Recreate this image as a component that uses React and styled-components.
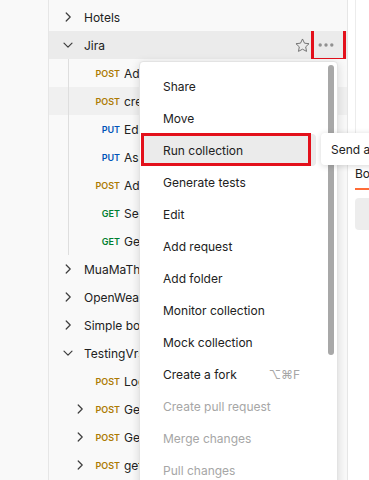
import styled, { createGlobalStyle } from "styled-components";

const GlobalStyle = createGlobalStyle`
  html, body {
    margin: 0;
    padding: 0;
    width: 369px;
    height: 480px;
    overflow: hidden;
    background: #ffffff;
  }
  body {
    font-family: Inter, "Noto Sans", "Liberation Sans", sans-serif;
    -webkit-font-smoothing: antialiased;
  }
  * {
    box-sizing: border-box;
  }
`;

const methodColors = {
  GET: "#007f31",
  POST: "#ad7a03",
  PUT: "#0053b8",
};

const tree = [
  { type: "collection", name: "Hotels", open: false },
  {
    type: "collection",
    name: "Jira",
    open: true,
    active: true,
    guide: true,
    children: [
      { method: "POST", name: "Add issue" },
      { method: "POST", name: "create issue", hover: true },
      { method: "PUT", name: "Edit issue" },
      { method: "PUT", name: "Assign issue" },
      { method: "POST", name: "Add comment" },
      { method: "GET", name: "Search issues" },
      { method: "GET", name: "Get issue" },
    ],
  },
  { type: "collection", name: "MuaMaThu", open: false },
  { type: "collection", name: "OpenWeather", open: false },
  { type: "collection", name: "Simple books API", open: false },
  {
    type: "collection",
    name: "TestingVrs",
    open: true,
    children: [
      { method: "POST", name: "Login" },
      { method: "POST", name: "Get token", folder: true },
      { method: "POST", name: "Get user", folder: true },
      { method: "POST", name: "get list", folder: true },
    ],
  },
];

const menuItems = [
  { label: "Share" },
  { label: "Move" },
  { label: "Run collection", marked: true },
  { label: "Generate tests" },
  { label: "Edit" },
  { label: "Add request" },
  { label: "Add folder" },
  { label: "Monitor collection" },
  { label: "Mock collection" },
  { label: "Create a fork", shortcut: "⌥⌘F" },
  { label: "Create pull request", disabled: true },
  { label: "Merge changes", disabled: true },
  { label: "Pull changes", disabled: true },
  { label: "Pull changes", disabled: true },
];

function Chevron({ open }) {
  return (
    <ChevronBox>
      <svg width="12" height="12" viewBox="0 0 12 12" fill="none">
        <path
          d={open ? "M2 4.2 L6 8.2 L10 4.2" : "M4.2 2 L8.2 6 L4.2 10"}
          stroke="#3d3d3d"
          strokeWidth="1.2"
          strokeLinecap="round"
          strokeLinejoin="round"
        />
      </svg>
    </ChevronBox>
  );
}

function StarIcon() {
  return (
    <svg width="17" height="17" viewBox="0 0 24 24" fill="none">
      <path
        d="M12 2.8 L14.8 8.7 L21.2 9.5 L16.5 13.9 L17.7 20.3 L12 17.2 L6.3 20.3 L7.5 13.9 L2.8 9.5 L9.2 8.7 Z"
        stroke="#6b6b6b"
        strokeWidth="1.3"
        strokeLinejoin="round"
      />
    </svg>
  );
}

function DotsIcon() {
  return (
    <svg width="16" height="6" viewBox="0 0 16 6">
      <circle cx="2.2" cy="3" r="1.7" fill="#909090" />
      <circle cx="8" cy="3" r="1.7" fill="#909090" />
      <circle cx="13.8" cy="3" r="1.7" fill="#909090" />
    </svg>
  );
}

export default function App() {
  return (
    <>
      <GlobalStyle />
      <Page>
        <Rail />
        <Sidebar>
          {tree.map((col) => (
            <div key={col.name}>
              <CollectionRow $active={col.active}>
                <Chevron open={col.open} />
                <RowName>{col.name}</RowName>
                {col.active && (
                  <Actions>
                    <StarButton>
                      <StarIcon />
                    </StarButton>
                    <DotsButton>
                      <DotsIcon />
                    </DotsButton>
                  </Actions>
                )}
              </CollectionRow>
              {col.open && (
                <Group $guide={col.guide}>
                  {col.children.map((req, i) => (
                    <RequestRow key={i} $hover={req.hover}>
                      <FolderSlot>{req.folder && <Chevron />}</FolderSlot>
                      <Method $color={methodColors[req.method]}>
                        {req.method}
                      </Method>
                      <RowName>{req.name}</RowName>
                    </RequestRow>
                  ))}
                </Group>
              )}
            </div>
          ))}
        </Sidebar>
        <Main>
          <UrlArea />
          <TabRow>
            <Tab>Body</Tab>
          </TabRow>
          <BodyBox />
        </Main>

        <Menu>
          <MenuList>
            {menuItems.map((item, i) => (
              <MenuItem
                key={i}
                $marked={item.marked}
                $disabled={item.disabled}
              >
                <span>{item.label}</span>
                {item.shortcut && <Shortcut>{item.shortcut}</Shortcut>}
              </MenuItem>
            ))}
          </MenuList>
          <ScrollTrack>
            <ScrollThumb />
          </ScrollTrack>
        </Menu>

        <Tooltip>Send a request</Tooltip>
      </Page>
    </>
  );
}

const Page = styled.div`
  position: relative;
  display: flex;
  width: 369px;
  height: 480px;
  overflow: hidden;
  background: #ffffff;
`;

const Rail = styled.div`
  flex: 0 0 49px;
  height: 100%;
  background: #f9f9f9;
  border-right: 1px solid #e6e6e6;
`;

const Sidebar = styled.div`
  flex: 0 0 299px;
  height: 100%;
  padding-top: 3px;
  background: #f9f9f9;
  border-right: 1px solid #e6e6e6;
`;

const BaseRow = styled.div`
  display: flex;
  align-items: center;
  height: 28px;
  font-size: 12px;
  color: #212121;
  white-space: nowrap;
  overflow: hidden;
`;

const CollectionRow = styled(BaseRow)`
  padding-left: 13px;
  gap: 10px;
  background: ${(p) => (p.$active ? "#ebebeb" : "transparent")};
`;

const RequestRow = styled(BaseRow)`
  padding-left: 25px;
  background: ${(p) => (p.$hover ? "#f0f0f0" : "transparent")};
`;

const Group = styled.div`
  position: relative;

  &::before {
    content: "";
    display: ${(p) => (p.$guide ? "block" : "none")};
    position: absolute;
    left: 19px;
    top: 0;
    bottom: 0;
    width: 1px;
    background: #dedede;
  }
`;

const ChevronBox = styled.span`
  display: flex;
  align-items: center;
  justify-content: center;
  width: 12px;
  height: 12px;
  flex: 0 0 12px;
`;

const FolderSlot = styled.span`
  display: flex;
  width: 12px;
  flex: 0 0 12px;
  margin-right: 2px;
`;

const Method = styled.span`
  flex: 0 0 32px;
  margin-right: 4px;
  text-align: right;
  font-size: 9px;
  font-weight: 600;
  color: ${(p) => p.$color};
`;

const RowName = styled.span`
  overflow: hidden;
  text-overflow: clip;
`;

const Actions = styled.div`
  display: flex;
  align-items: center;
  margin-left: auto;
  margin-right: 7px;
`;

const StarButton = styled.span`
  display: flex;
  align-items: center;
  justify-content: center;
  width: 20px;
  height: 28px;
`;

const DotsButton = styled.span`
  position: relative;
  display: flex;
  align-items: center;
  justify-content: center;
  width: 28px;
  height: 28px;

  &::after {
    content: "";
    position: absolute;
    left: -1px;
    right: -6px;
    top: -3px;
    bottom: -2px;
    border: 3px solid #e3101b;
  }
`;

const Main = styled.div`
  flex: 1;
  height: 100%;
  padding-left: 7px;
  background: #ffffff;
`;

const UrlArea = styled.div`
  height: 160px;
  border-left: 1px solid #ececec;
`;

const TabRow = styled.div`
  display: flex;
`;

const Tab = styled.div`
  display: flex;
  align-items: center;
  height: 30px;
  padding-bottom: 2px;
  font-size: 12px;
  color: #212121;
  border-bottom: 2px solid #ff6c37;
  white-space: nowrap;
`;

const BodyBox = styled.div`
  height: 32px;
  margin-top: 8px;
  background: #ededed;
  border-radius: 4px 0 0 4px;
`;

const Menu = styled.div`
  position: absolute;
  left: 139px;
  top: 61px;
  width: 199px;
  height: 440px;
  display: flex;
  background: #ffffff;
  border: 1px solid #e3e3e3;
  border-radius: 4px;
  box-shadow: 0 2px 10px rgba(0, 0, 0, 0.14);
  z-index: 10;
`;

const MenuList = styled.div`
  flex: 0 0 180px;
  display: flex;
  flex-direction: column;
  padding: 8px 4px 0 3px;
`;

const MenuItem = styled.div`
  position: relative;
  display: flex;
  align-items: center;
  justify-content: space-between;
  flex: 0 0 32px;
  padding: 0 16px 0 20px;
  border-radius: 4px;
  font-size: 12px;
  white-space: nowrap;
  color: ${(p) => (p.$disabled ? "#a6a6a6" : "#212121")};
  background: ${(p) => (p.$marked ? "#ebebeb" : "transparent")};

  &::after {
    content: "";
    display: ${(p) => (p.$marked ? "block" : "none")};
    position: absolute;
    left: -2px;
    right: 5px;
    top: -1px;
    bottom: 0;
    border: 3px solid #e3101b;
  }
`;

const Shortcut = styled.span`
  color: #a6a6a6;
  font-size: 12px;
`;

const ScrollTrack = styled.div`
  flex: 1;
  padding: 3px 0 0 8px;
`;

const ScrollThumb = styled.div`
  width: 6px;
  height: 290px;
  border-radius: 3px;
  background: #a8a8a8;
`;

const Tooltip = styled.div`
  position: absolute;
  left: 321px;
  top: 133px;
  height: 32px;
  display: flex;
  align-items: center;
  padding: 0 10px;
  background: #ffffff;
  border-radius: 4px;
  box-shadow: 0 1px 6px rgba(0, 0, 0, 0.16);
  font-size: 12px;
  color: #212121;
  white-space: nowrap;
  z-index: 20;
`;
